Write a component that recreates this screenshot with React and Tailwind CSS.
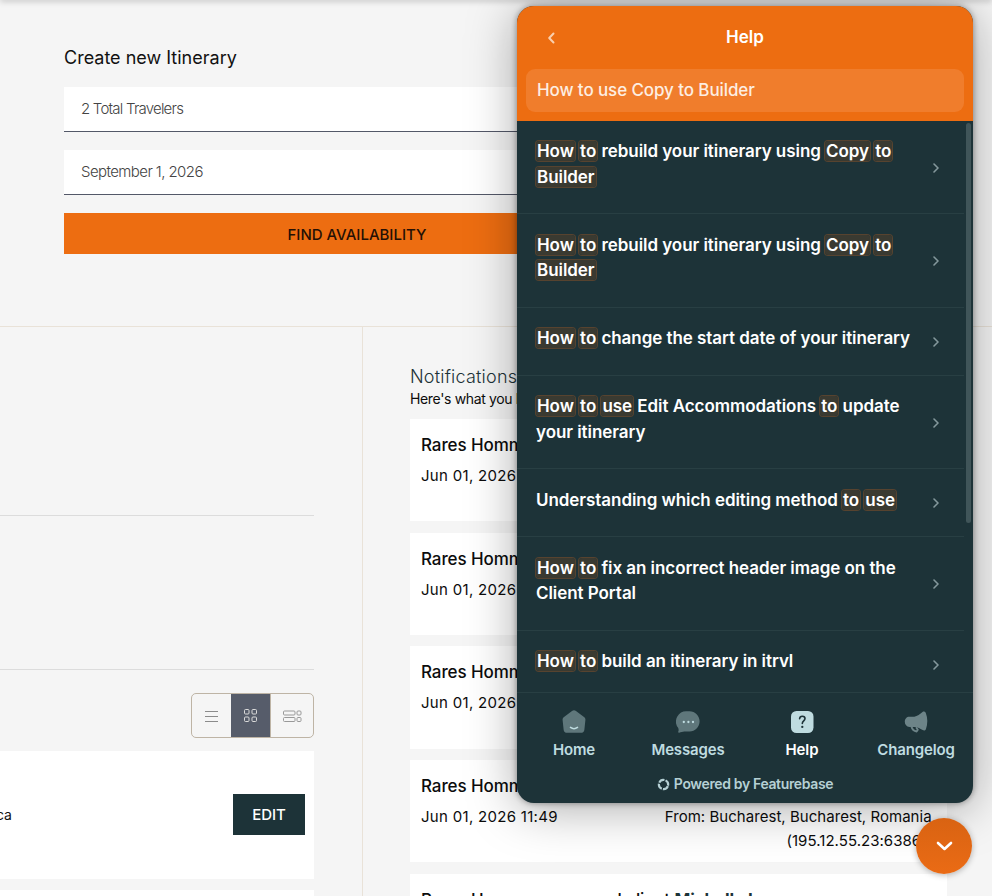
import React from 'react';

// words wrapped in asterisks are search matches
const results = [
  ['*How* *to* rebuild your itinerary using *Copy* *to*', '*Builder*'],
  ['*How* *to* rebuild your itinerary using *Copy* *to*', '*Builder*'],
  ['*How* *to* change the start date of your itinerary'],
  ['*How* *to* *use* Edit Accommodations *to* update', 'your itinerary'],
  ['Understanding which editing method *to* *use*'],
  ['*How* *to* fix an incorrect header image on the', 'Client Portal'],
  ['*How* *to* build an itinerary in itrvl'],
];

function Line({ text }) {
  return (
    <span className="block whitespace-nowrap">
      {text.split('*').map((part, i) =>
        i % 2 === 1 ? (
          <mark
            key={i}
            className="rounded-[3px] bg-[#3a3a31] px-px text-white shadow-[0_0_0_1px_#57432f]"
          >
            {part}
          </mark>
        ) : (
          part
        )
      )}
    </span>
  );
}

function ResultRow({ lines }) {
  return (
    <div className="flex items-center justify-between border-b border-[#283f43] pr-[25px] pl-[19px]">
      <div className="pt-[18.4px] pb-[23.1px] text-[17px] leading-[25.5px] font-semibold tracking-[-0.055px] text-white">
        {lines.map((line) => (
          <Line key={line} text={line} />
        ))}
      </div>
      <svg className="mt-px h-[10px] w-[6px]" viewBox="0 0 6 10" fill="none" stroke="#84989c" strokeWidth="1.6">
        <path d="M1 1l4 4-4 4" strokeLinecap="round" strokeLinejoin="round" />
      </svg>
    </div>
  );
}

function HomeIcon() {
  return (
    <svg className="h-6 w-6" viewBox="0 0 24 24">
      <path
        d="M10 1.100a3.400 3.400 0 0 1 4 0l8 5.900c1 .7 1.500 1.700 1.400 2.900l-1 9.500a3.700 3.700 0 0 1-3.700 3.400H5.300a3.700 3.700 0 0 1-3.700-3.400l-1-9.500C.5 8.700 1 7.700 2 7z"
        fill="#5f777b"
      />
      <path d="M8.500 17.400c2 1.500 5 1.500 7 0" fill="none" stroke="#bfdce0" strokeWidth="1.600" strokeLinecap="round" />
    </svg>
  );
}

function MessagesIcon() {
  return (
    <svg className="h-6 w-6" viewBox="0 0 24 24">
      <path
        d="M11.300 1.200h2.200c5.600 0 10.100 4.500 10.100 10.100 0 5.700-4.500 10.300-10.100 10.300H8.200c-1.500 0-3.300.9-5 1.100-.9.100-1.300-.5-.9-1.200.5-1 .4-2.600-.2-3.700A10.400 10.400 0 0 1 11.300 1.200z"
        fill="#5f777b"
      />
      <g fill="#bfdce0">
        <circle cx="7.800" cy="12" r="1.150" />
        <circle cx="12.400" cy="12" r="1.150" />
        <circle cx="17" cy="12" r="1.150" />
      </g>
    </svg>
  );
}

function HelpIcon() {
  return (
    <svg className="h-6 w-6" viewBox="0 0 24 24" fill="none">
      <rect x="1" y="1" width="22.500" height="22" rx="5.500" fill="#bfdce0" />
      <path
        d="M9.600 8.800c.1-1.700 1.200-2.600 2.700-2.600s2.700.9 2.700 2.400c0 2.200-2.700 2.400-2.700 4.900"
        stroke="#1d3338"
        strokeWidth="1.600"
        strokeLinecap="round"
      />
      <circle cx="12.300" cy="16.900" r="1.150" fill="#1d3338" />
    </svg>
  );
}

function ChangelogIcon() {
  return (
    <svg className="h-6 w-6" viewBox="0 0 24 24">
      <path
        d="M18.500 1.900c1.200-.9 2.700-.4 3.300 1 2 4.900 2 11.300.1 16.300-.6 1.400-2 1.800-3.200.9-2.100-1.500-4.400-2.700-7-3.200H5.400C2.600 16.700.8 14.600.8 11.700c0-2.900 1.800-5 4.600-5h4.900c3-.7 5.800-2.700 8.200-4.800z"
        fill="#6d8488"
      />
      <path d="M7.300 16.300c.8 2.900 2.500 4.900 5.300 5.200l1.200-1.700-1.700-2.600" fill="none" stroke="#6d8488" strokeWidth="1.900" strokeLinejoin="round" />
    </svg>
  );
}

const tabs = [
  { label: 'Home', Icon: HomeIcon },
  { label: 'Messages', Icon: MessagesIcon },
  { label: 'Help', Icon: HelpIcon, active: true },
  { label: 'Changelog', Icon: ChangelogIcon },
];

function HelpWidget() {
  return (
    <div className="absolute top-[6px] left-[517px] flex h-[797px] w-[456px] flex-col overflow-hidden rounded-[17px] bg-[#1d3338] shadow-[0_5px_50px_rgba(0,0,0,0.34),0_0_6px_rgba(0,0,0,0.4)]">
      <div className="h-[115px] shrink-0 bg-[#ed6d11] px-[9px]">
        <div className="grid h-[63px] grid-cols-[50px_1fr_50px] items-center">
          <svg className="ml-[21px] h-3 w-[9px]" viewBox="0 0 9 12" fill="none" stroke="#f9cfae" strokeWidth="2">
            <path d="M6.500 1.500L2.200 6l4.300 4.500" strokeLinecap="round" strokeLinejoin="round" />
          </svg>
          <h2 className="text-center text-[17px] font-semibold text-white">Help</h2>
        </div>
        <div className="flex h-[43px] items-center rounded-[9px] bg-[#f07d2c] px-[11px] text-[17px] font-medium tracking-[-0.1px] text-[#fdeee2]">
          How to use Copy to Builder
        </div>
      </div>

      <div className="flex h-[571px] shrink-0 overflow-hidden">
        <div className="w-[447px]">
          {results.map((lines, i) => (
            <ResultRow key={i} lines={lines} />
          ))}
        </div>
        <div className="mt-[2px] ml-[2px] h-[400px] w-[5px] rounded-full bg-[#405559]" />
      </div>

      <div className="flex-1 border-t border-[#283f43]">
        <div className="grid grid-cols-4 pt-[17px]">
          {tabs.map(({ label, Icon, active }) => (
            <div key={label} className="flex flex-col items-center gap-[6px]">
              <Icon />
              <span
                className={
                  active
                    ? 'text-[15px] leading-5 font-semibold tracking-[-0.1px] text-white'
                    : 'text-[15px] leading-5 font-semibold tracking-[-0.15px] text-[#bfdce0]'
                }
              >
                {label}
              </span>
            </div>
          ))}
        </div>
        <div className="mt-[14px] flex items-center justify-center gap-1 text-[14px] leading-5 font-semibold tracking-[-0.36px] text-[#b5d0d4]">
          <svg className="h-[13px] w-[13px]" viewBox="0 0 13 13" fill="none" stroke="currentColor" strokeWidth="2.200">
            <circle cx="6.500" cy="6.500" r="4.600" strokeDasharray="6.000 1.226" transform="rotate(20 6.500 6.500)" />
          </svg>
          Powered by Featurebase
        </div>
      </div>
    </div>
  );
}

function SearchForm() {
  return (
    <section className="h-[327px] border-b border-[#e9e2d8] pt-[45px] pl-16">
      <h1 className="text-[18px] leading-[26px] text-[#111]">Create new Itinerary</h1>
      <div className="mt-4 flex w-[586px] flex-col">
        <div className="h-[45px] border-b border-[#535868] bg-white px-[17px] text-[15px] leading-[44px] font-light tracking-[-0.78px] text-[#444]">
          2 Total Travelers
        </div>
        <div className="mt-[18px] h-[45px] border-b border-[#535868] bg-white px-[17px] text-[15px] leading-[44px] font-light tracking-[-0.58px] text-[#444]">
          September 1, 2026
        </div>
        <button className="mt-[18px] h-[41px] bg-[#ed6d11] pt-[3px] text-[15px] font-medium text-[#251005]">
          FIND AVAILABILITY
        </button>
      </div>
    </section>
  );
}

function ViewToggle() {
  return (
    <div className="mt-[23px] flex h-[45px] w-[123px] shrink-0 self-end overflow-hidden rounded-[5px] border border-[#beb4a5]">
      <div className="flex w-[39px] items-center justify-center">
        <svg className="h-3 w-[13px]" viewBox="0 0 13 12" stroke="#8b8b8b">
          <path d="M0 1.500h13M0 6.500h13M0 11.500h13" />
        </svg>
      </div>
      <div className="flex w-10 items-center justify-center border-r border-[#beb4a5] bg-[#565c6a]">
        <svg className="h-[13px] w-[13px]" viewBox="0 0 13 13" fill="none" stroke="#dadada">
          <rect x=".5" y=".5" width="4.500" height="4.500" rx="1" />
          <rect x="8" y=".5" width="4.500" height="4.500" rx="1" />
          <rect x=".5" y="8" width="4.500" height="4.500" rx="1" />
          <rect x="8" y="8" width="4.500" height="4.500" rx="1" />
        </svg>
      </div>
      <div className="flex flex-1 items-center justify-center">
        <svg className="h-3 w-[19px]" viewBox="0 0 19 12" fill="none" stroke="#999">
          <rect x=".5" y="1" width="11.500" height="4" rx="1" />
          <rect x="14" y="1" width="4" height="4" rx="1" />
          <rect x=".5" y="7.500" width="11.500" height="4" rx="1" />
          <rect x="14" y="7.500" width="4" height="4" rx="1" />
        </svg>
      </div>
    </div>
  );
}

function ItineraryList() {
  return (
    <section className="flex h-[569px] w-[363px] flex-col border-r border-[#e9e2d8] pr-12">
      <div className="h-[189px] shrink-0 border-b border-[#dcdcdc]" />
      <div className="h-[154px] shrink-0 border-b border-[#dcdcdc]" />
      <ViewToggle />
      <div className="mt-[13px] flex h-32 shrink-0 items-center justify-between bg-white pr-[9px] pb-[2px]">
        <span className="-ml-1 text-[14px] tracking-[-0.2px] text-[#111]">ca</span>
        <button className="h-[41px] w-[72px] bg-[#1d3338] pt-[2px] text-[15px] font-medium text-white">EDIT</button>
      </div>
      <div className="mt-[11px] h-10 shrink-0 bg-white" />
    </section>
  );
}

function Notifications() {
  return (
    <section className="h-[569px] w-[584px] overflow-hidden pt-[37px] pl-[47px] text-[#0c0c0c]">
      <h2 className="text-[18px] leading-[25px] font-light tracking-[0.2px] text-[#1d3338]">Notifications</h2>
      <p className="text-[14px] leading-[19px] tracking-[-0.35px]">Here's what you have missed</p>
      <div className="mt-[11px] flex flex-col gap-[11.3px]">
        {[0, 1, 2, 3, 4].map((n) => (
          <article key={n} className="h-[102.4px] shrink-0 bg-white px-[11px] pt-[13px]">
            <p className="text-[17px] leading-[26px] font-medium tracking-[-0.1px] whitespace-nowrap">
              Rares Hommerson saved client {n === 4 && <b className="text-[#1d3338]">Michelle L</b>}
            </p>
            <div className="mt-[6px] flex justify-between text-[15px] leading-6">
              <span className="tracking-[0.3px]">Jun 01, 2026 11:49</span>
              <span className="text-right tracking-[0.04px]">
                From: Bucharest, Bucharest, Romania,
                <br />
                (195.12.55.23:63868)
              </span>
            </div>
          </article>
        ))}
      </div>
    </section>
  );
}

export default function App() {
  return (
    <div className="relative h-[896px] w-[992px] overflow-hidden bg-[#f5f5f5] font-['Inter','Liberation_Sans',sans-serif]">
      <div className="absolute -top-1 left-0 h-1 w-full shadow-[0_1px_6px_rgba(0,0,0,0.25)]" />
      <SearchForm />
      <div className="flex">
        <ItineraryList />
        <Notifications />
      </div>
      <HelpWidget />
      <div className="absolute top-[818px] left-[916px] flex h-14 w-14 items-center justify-center rounded-full bg-linear-to-b from-[#d96312] to-[#ea6b15] shadow-[0_1px_6px_rgba(0,0,0,0.3)]">
        <svg className="h-[10px] w-[17px]" viewBox="0 0 17 10" fill="none" stroke="#fff" strokeWidth="2.600">
          <path d="M2 2l6.500 6L15 2" strokeLinecap="round" strokeLinejoin="round" />
        </svg>
      </div>
    </div>
  );
}
